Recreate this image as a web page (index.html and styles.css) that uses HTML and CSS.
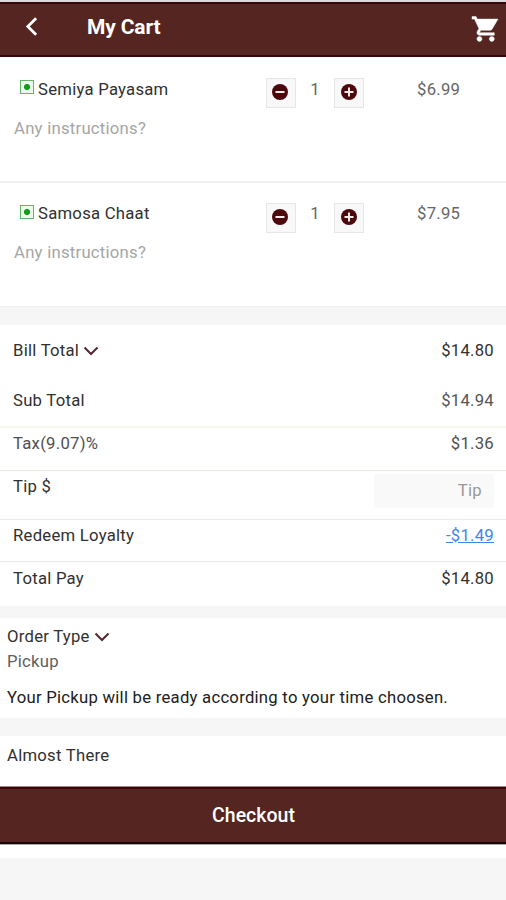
FILE: index.html
```html
<!DOCTYPE html>
<html lang="en">
<head>
<meta charset="utf-8">
<title>My Cart</title>
<link rel="stylesheet" href="styles.css">
</head>
<body>
<header class="topbar">
  <svg class="back" viewBox="0 0 14 22"><path d="M12 2 3 11l9 9"/></svg>
  <h1>My Cart</h1>
  <svg class="cart" viewBox="1 2 21 20"><path d="M7 18c-1.100 0-1.990.9-1.990 2S5.900 22 7 22s2-.9 2-2-.9-2-2-2zM1 2v2h2l3.600 7.590-1.350 2.450c-.16.280-.25.610-.25.960 0 1.100.9 2 2 2h12v-2H7.420c-.14 0-.25-.11-.25-.25l.03-.12.900-1.630h7.450c.75 0 1.410-.41 1.750-1.030L22 4H5.210l-.94-2H1zm16 16c-1.100 0-1.990.9-1.990 2s.89 2 1.990 2 2-.9 2-2-.9-2-2-2z"/></svg>
</header>
<main>
  <section class="item">
    <div class="item-row">
      <span class="veg"></span><span class="name">Semiya Payasam</span>
      <button class="step"><svg viewBox="0 0 16 16"><circle cx="8" cy="8" r="8"/><path d="M3.500 8h9"/></svg></button>
      <span class="qty">1</span>
      <button class="step"><svg viewBox="0 0 16 16"><circle cx="8" cy="8" r="8"/><path d="M3.500 8h9M8 3.500v9"/></svg></button>
      <span class="price">$6.99</span>
    </div>
    <p class="note">Any instructions?</p>
  </section>
  <section class="item second">
    <div class="item-row">
      <span class="veg"></span><span class="name">Samosa Chaat</span>
      <button class="step"><svg viewBox="0 0 16 16"><circle cx="8" cy="8" r="8"/><path d="M3.500 8h9"/></svg></button>
      <span class="qty">1</span>
      <button class="step"><svg viewBox="0 0 16 16"><circle cx="8" cy="8" r="8"/><path d="M3.500 8h9M8 3.500v9"/></svg></button>
      <span class="price">$7.95</span>
    </div>
    <p class="note">Any instructions?</p>
  </section>
  <section class="bill">
    <div class="row total"><span>Bill Total<svg class="chev" viewBox="0 0 16 10"><path d="m1.500 1.500 6.500 6.500 6.500-6.500"/></svg></span><span>$14.80</span></div>
    <div class="row sub"><span>Sub Total</span><span class="mid">$14.94</span></div>
    <div class="row tax"><span>Tax(9.07)%</span><span>$1.36</span></div>
    <div class="row tip"><span>Tip $</span><span class="field">Tip</span></div>
    <div class="row redeem"><span>Redeem Loyalty</span><a>-$1.49</a></div>
    <div class="row pay"><span>Total Pay</span><span>$14.80</span></div>
  </section>
  <section class="order">
    <p>Order Type<svg class="chev" viewBox="0 0 16 10"><path d="m1.500 1.500 6.500 6.500 6.500-6.500"/></svg></p>
    <p class="kind">Pickup</p>
    <p class="ready">Your Pickup will be ready according to your time choosen.</p>
  </section>
  <section class="almost">Almost There</section>
  <button class="checkout">Checkout</button>
</main>
</body>
</html>
```

FILE: styles.css
```css
* { box-sizing: border-box; }
body {
  margin: 0;
  height: 900px;
  overflow: hidden;
  background: #f6f6f6;
  color: #303030;
  font: 16.700px/24px Roboto, sans-serif;
  letter-spacing: 0.25px;
}
p, h1 { margin: 0; }
button { font: inherit; letter-spacing: inherit; padding: 0; border: 0; }
.topbar {
  display: flex;
  align-items: center;
  height: 57px;
  padding: 0 8px 6px 25px;
  border-top: 2px solid #dcd8dc;
  background: #552521;
  box-shadow: inset 0 2px #350609, inset 0 -2px #350609;
}
.back { width: 13px; height: 21px; fill: none; stroke: #fff; stroke-width: 3; }
h1 { flex: 1; margin-left: 49px; font-size: 21px; font-weight: 700; letter-spacing: -0.15px; color: #fff; }
.cart { width: 26px; height: 26px; margin-top: 4px; fill: #fff; stroke: #fff; stroke-width: 0.4; overflow: visible; }
.item { height: 126px; padding: 21px 0 0 14px; background: #fff; border-bottom: 2px solid #f1f1f1; }
.item.second { height: 124px; padding-top: 19px; border-bottom: 1px solid #efefef; }
.item-row { display: flex; align-items: flex-start; height: 39px; }
.veg {
  width: 14px; height: 14px; margin: 2px 4px 0 6px;
  border: 1px solid #60b765;
  background: radial-gradient(circle, #159b1c 2.600px, #eef8ee 3.600px);
}
.name { width: 228px; }
.step {
  display: flex; align-items: center; justify-content: center;
  width: 30px; height: 30px;
  background: #f8f8f8; border: 1px solid #e6e6e6;
}
.second .step { margin-top: 1px; }
.second .veg { margin-top: 3px; }
.step svg { width: 16px; height: 16px; margin: -2px 1px 0 0; fill: #4d080d; stroke: #f4e9e9; stroke-width: 2; }
.step:first-of-type svg { margin-right: 2px; }
.step circle { stroke: none; }
.qty { width: 38px; text-align: center; color: #666; }
.price { margin-left: 53px; color: #666; }
.note { color: #a5a5a5; }
.bill { height: 281px; margin-top: 18px; padding-top: 14px; background: #fff; }
.row { display: flex; justify-content: space-between; padding: 0 12px 0 13px; }
.total { height: 50px; }
.sub { height: 39px; border-bottom: 2px solid #f7f7ec; }
.mid { color: #555; }
.tax { height: 43px; padding-top: 4px; color: #505050; border-bottom: 1px solid #ebe9dd; }
.tip { height: 49px; padding-top: 4px; border-bottom: 1px solid #ecebe6; }
.field { width: 120px; height: 34px; margin-top: -1px; padding: 5px 12px; border-radius: 2px; background: #f9f9f9; color: #999; text-align: right; }
.redeem { height: 42px; padding-top: 4px; border-bottom: 1px solid #ecebe8; }
.redeem a { color: #4284ec; text-decoration: underline; }
.pay { padding-top: 5px; }
.chev { width: 16px; height: 10px; margin-left: 4px; fill: none; stroke: #542832; stroke-width: 2; }
.order { height: 100px; margin-top: 12px; padding: 7px; background: #fff; }
.kind { margin-top: 1px; color: #606060; }
.ready { margin-top: 12px; color: #202020; }
.almost { height: 50px; margin-top: 18px; padding: 8px 7px; background: #fff; }
.checkout {
  display: block; width: 100%; height: 59px;
  border-top: 1px solid #998a8a; border-bottom: 1px solid #aaa;
  background: #552521;
  box-shadow: inset 0 2px #400006, inset 0 -2px #180608, 0 13px #fff;
  color: #fff; font-size: 19.500px; font-weight: 500; letter-spacing: 0;
  padding: 1px 0 0 1px;
}
```
